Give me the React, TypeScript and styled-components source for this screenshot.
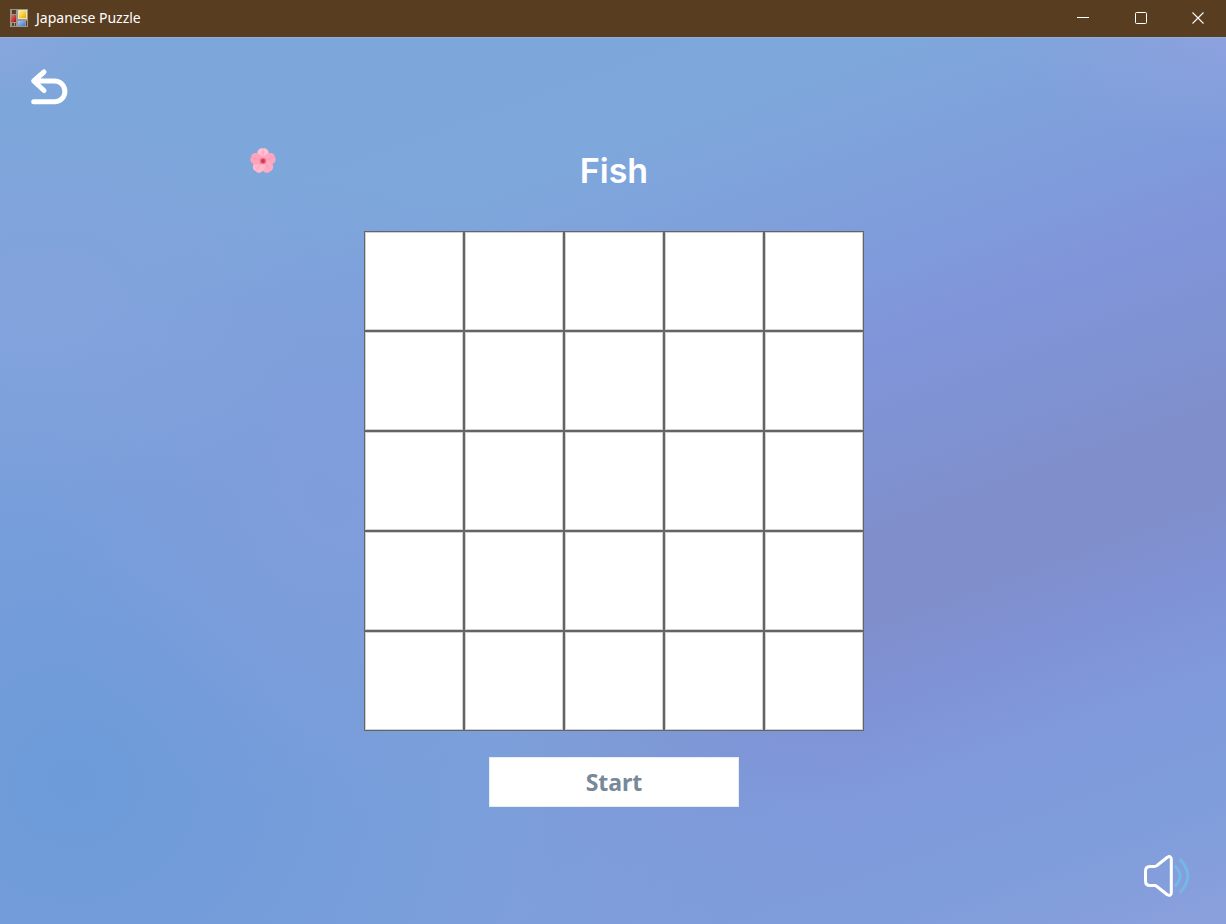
import React, { useState } from "react";
import styled, { createGlobalStyle } from "styled-components";

const GlobalStyle = createGlobalStyle`
  *, *::before, *::after { box-sizing: border-box; }
  body { margin: 0; font-family: "Open Sans", "Noto Sans", sans-serif; }
`;

const Window = styled.div`
  display: flex;
  flex-direction: column;
  min-height: 100vh;
`;

const TitleBar = styled.header`
  display: flex;
  align-items: center;
  height: 37px;
  padding: 0 0 2px 10px;
  background: #593d21;
  color: #fff;
`;

const Caption = styled.span`
  flex: 1;
  margin-left: 8px;
  font-family: "Noto Sans", "Open Sans", sans-serif;
  font-size: 14px;
  line-height: 20px;
`;

const CaptionButton = styled.button`
  display: grid;
  place-items: center;
  width: 58px;
  height: 34px;
  padding: 0;
  border: 0;
  background: none;
  color: inherit;

  &:last-child { width: 56px; }
`;

const Stage = styled.main`
  position: relative;
  flex: 1;
  display: flex;
  flex-direction: column;
  align-items: center;
  padding: 28px 28px 26px 30px;
  border-top: 1px solid #8fb0dc;
  background:
    radial-gradient(ellipse 18% 12% at 100% 0%, rgba(143, 162, 223, 0.8) 0%, rgba(143, 162, 223, 0) 100%),
    radial-gradient(ellipse 10% 8% at 0% 0%, rgba(136, 165, 222, 1) 0%, rgba(136, 165, 222, 0) 100%),
    radial-gradient(ellipse 22% 24% at 4% 30%, rgba(131, 162, 220, 0.9) 0%, rgba(131, 162, 220, 0) 100%),
    radial-gradient(ellipse 24% 36% at 27% 52%, rgba(128, 157, 219, 0.9) 0%, rgba(128, 157, 219, 0) 100%),
    radial-gradient(ellipse 38% 50% at 6% 84%, rgba(107, 154, 217, 0.9) 0%, rgba(107, 154, 217, 0) 100%),
    radial-gradient(ellipse 60% 70% at 10% 80%, rgba(125, 160, 219, 1) 0%, rgba(125, 160, 219, 1) 50%, rgba(125, 160, 219, 0) 100%),
    linear-gradient(160deg, #7ca6da 0%, #7ea8db 24%, #7f9cdb 39%, #8095d9 47%, #7f92d2 55%, #808fcc 61%, #808fcc 68%, #7f92d6 74%, #8099da 80%, #7f9ddb 90%, #8aa0dc 100%);
`;

const IconButton = styled.button<{ $side: "start" | "end" }>`
  display: grid;
  place-items: center;
  align-self: flex-${(p) => p.$side};
  width: 56px;
  height: 44px;
  margin-top: ${(p) => (p.$side === "end" ? "auto" : "0")};
  padding: 0;
  border: 0;
  background: none;
  cursor: pointer;
`;

const PuzzleName = styled.h1`
  margin: 40px 0;
  color: #fff;
  font: 600 34px/41px Inter, "Liberation Sans", sans-serif;
`;

const Board = styled.div`
  display: grid;
  grid-template-columns: repeat(5, 100px);
  grid-auto-rows: 100px;
`;

const Cell = styled.button`
  padding: 0;
  border: 1px solid #646464;
  background: #fff;
  box-shadow: inset 0 0 0 1px #d0d0d0;

  &[aria-pressed="true"] { background: #5b6b80; }
`;

const StartButton = styled.button`
  width: 250px;
  height: 50px;
  margin: 26px 0;
  padding: 0;
  border: 1px solid #e6ecf8;
  background: #fff;
  color: #778899;
  font: bold 23px/32px "Noto Sans", "Open Sans", sans-serif;
`;

const Flower = styled.svg`
  position: absolute;
  top: 109px;
  left: 249px;
`;

const AppIcon = () => (
  <svg width="18" height="18" viewBox="0 0 18 18" aria-hidden="true">
    <defs>
      <linearGradient id="gold" x2="1" y2="1">
        <stop stopColor="#fdeb9a" /><stop offset=".5" stopColor="#f8cf3c" /><stop offset="1" stopColor="#dfa50f" />
      </linearGradient>
      <linearGradient id="azure" x2="1" y2="1">
        <stop stopColor="#a3c8fb" /><stop offset="1" stopColor="#3f77da" />
      </linearGradient>
      <linearGradient id="ruby" x2="1" y2="1">
        <stop stopColor="#e8766a" /><stop offset="1" stopColor="#a30f12" />
      </linearGradient>
    </defs>
    <path fill="#9d968e" d="M0 0h18v18H0z" />
    <path fill="#573f2b" d="M2 1h4v4H2zM2 14h2v3H2zM5 14h1v3H5zM16 12h1v5h-1z" />
    <path fill="url(#ruby)" d="M1 6h5v7H1z" />
    <path fill="#efe3b0" d="M8 1h9v9H8z" />
    <path fill="url(#gold)" d="M9 2h7v7H9z" />
    <path fill="url(#azure)" d="M8 12h7v5H8z" />
  </svg>
);

export default function App() {
  const [filled, setFilled] = useState<boolean[]>(Array(25).fill(false));
  const [muted, setMuted] = useState(false);
  const toggle = (n: number) => setFilled((f) => f.map((v, i) => (i === n ? !v : v)));

  return (
    <Window>
      <GlobalStyle />
      <TitleBar>
        <AppIcon />
        <Caption>Japanese Puzzle</Caption>
        <CaptionButton aria-label="Minimize">
          <svg width="12" height="12"><path d="M0 5.500h12" stroke="currentColor" /></svg>
        </CaptionButton>
        <CaptionButton aria-label="Maximize">
          <svg width="12" height="12"><rect x=".5" y=".5" width="11" height="11" rx="1" fill="none" stroke="currentColor" /></svg>
        </CaptionButton>
        <CaptionButton aria-label="Close">
          <svg width="12" height="12"><path d="M.5.5l11 11M11.500.5l-11 11" stroke="currentColor" strokeWidth="1.100" /></svg>
        </CaptionButton>
      </TitleBar>
      <Stage>
        <IconButton $side="start" aria-label="Back">
          <svg width="56" height="44" viewBox="0 0 56 44" fill="none" stroke="#fff" strokeWidth="5" strokeLinecap="round" strokeLinejoin="round">
            <path d="M14 6L3.700 15L14 24.500M4.500 15H24.500A10.300 10.300 0 0 1 24.500 35.800H3.700" />
          </svg>
        </IconButton>
        <Flower width="28" height="28" viewBox="0 0 28 28" aria-hidden="true">
          {[0, 72, 144, 216, 288].map((a, i) => (
            <path
              key={a}
              d="M14 16C9 13 7 7 9 3.500C10.500 1 13 1 14 1.600C15 1 17.500 1 19 3.500C21 7 19 13 14 16Z"
              fill={["#ffc0d2", "#ffa6be", "#ffabc2", "#ffb8cc", "#ffa2bb"][i]}
              transform={`rotate(${a} 14 14)`}
            />
          ))}
          <path d="M14 3v8M24.500 10.600l-7 2.400M20.500 22.500l-4.500-6M7.500 22.500l4.500-6M3.500 10.600l7 2.400" stroke="#ff94b0" strokeWidth=".8" />
          <circle cx="14" cy="14" r="3.300" fill="#f0718f" />
          <circle cx="14" cy="14" r="1.900" fill="#c93a50" />
        </Flower>
        <PuzzleName>Fish</PuzzleName>
        <Board role="group" aria-label="Puzzle board">
          {filled.map((on, n) => (
            <Cell
              key={n}
              aria-pressed={on}
              aria-label={`Row ${Math.floor(n / 5) + 1}, column ${(n % 5) + 1}`}
              onClick={() => toggle(n)}
            />
          ))}
        </Board>
        <StartButton>Start</StartButton>
        <IconButton $side="end" aria-label="Sound" aria-pressed={!muted} onClick={() => setMuted(!muted)}>
          <svg width="56" height="44" viewBox="0 0 56 44" fill="none" strokeLinecap="round" strokeLinejoin="round">
            <path d="M12 12.500H8Q3.500 12.500 3.500 17V27Q3.500 31.500 8 31.500H12.500Q14 31.500 15 32.500L25 40.500Q29.300 43 29.300 38.500V5.500Q29.300 1 25 3.500L15 11.500Q14 12.500 12 12.500Z" stroke="#fff" strokeWidth="3" />
            {!muted && (
              <path d="M33.500 12.500Q42.500 22 33.500 31.500M38.500 6Q53 22 38.500 38" stroke="#73b8e6" strokeWidth="3" />
            )}
          </svg>
        </IconButton>
      </Stage>
    </Window>
  );
}
